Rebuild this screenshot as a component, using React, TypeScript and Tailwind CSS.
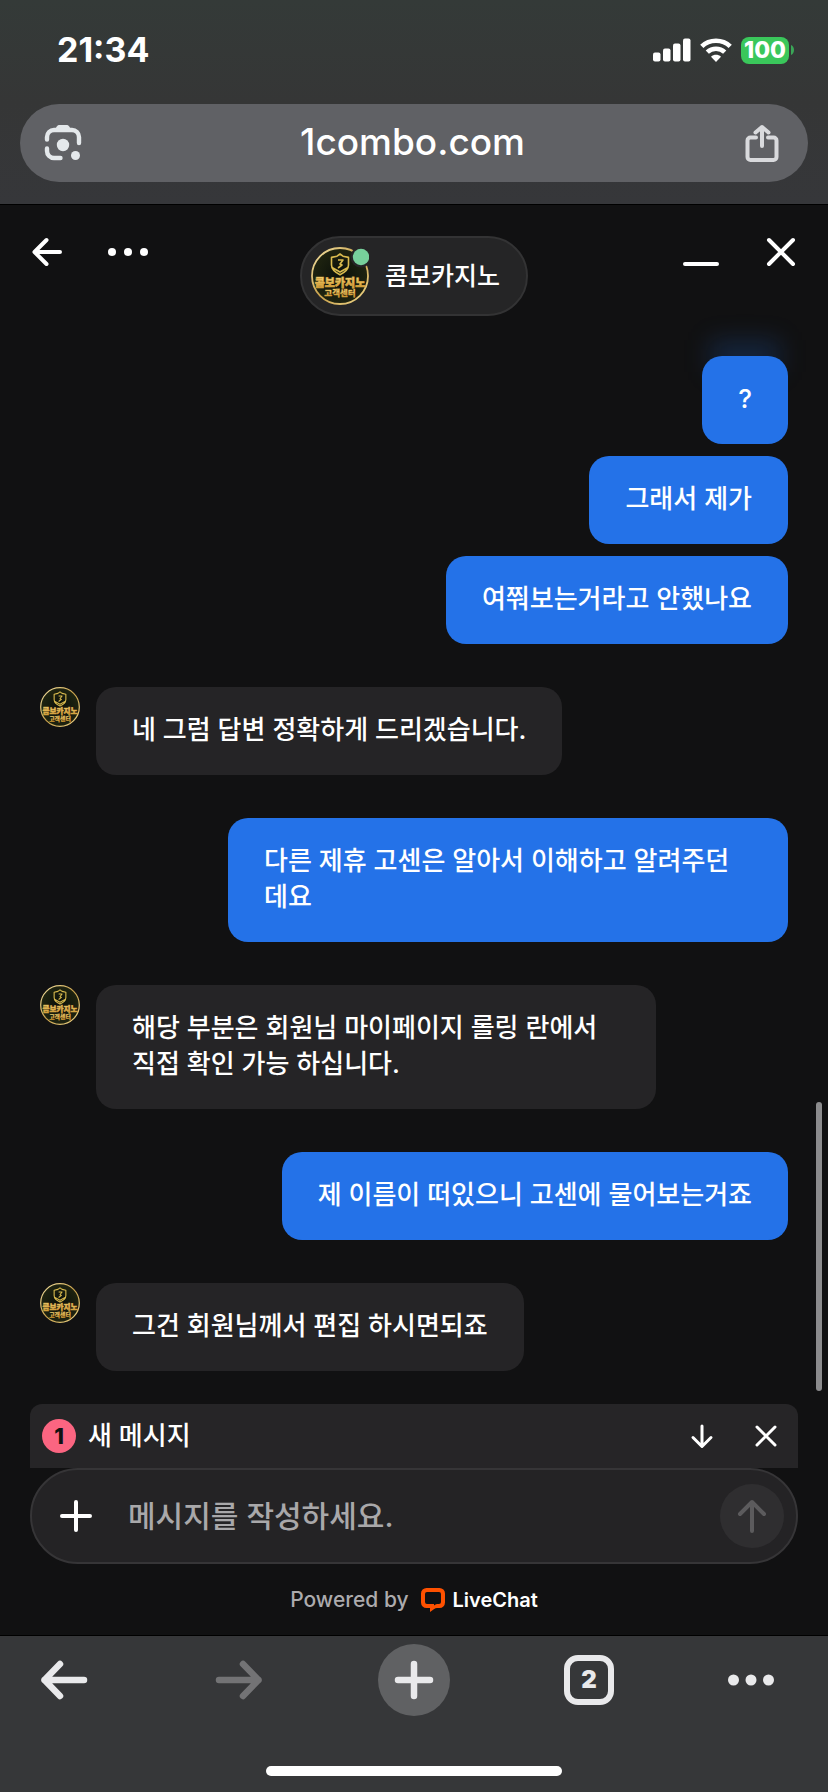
import React from "react";

type Message = { from: "agent" | "visitor"; lines: string[] };

const conversation: Message[] = [
  { from: "visitor", lines: ["?", "그래서 제가", "여쭤보는거라고 안했나요"] },
  { from: "agent", lines: ["네 그럼 답변 정확하게 드리겠습니다."] },
  { from: "visitor", lines: ["다른 제휴 고센은 알아서 이해하고 알려주던데요"] },
  { from: "agent", lines: ["해당 부분은 회원님 마이페이지 롤링 란에서 직접 확인 가능 하십니다."] },
  { from: "visitor", lines: ["제 이름이 떠있으니 고센에 물어보는거죠"] },
  { from: "agent", lines: ["그건 회원님께서 편집 하시면되죠"] },
];

function Avatar({ className, online }: { className: string; online?: boolean }) {
  return (
    <svg viewBox="0 0 58 58" className={className} role="img" aria-label="콤보카지노 고객센터">
      <defs>
        <linearGradient id="gold" x1="0" y1="0" x2="0" y2="1">
          <stop offset="0" stopColor="#ffe98a" />
          <stop offset="1" stopColor="#c98a1e" />
        </linearGradient>
        <linearGradient id="ring" x1="0" y1="0" x2="1" y2="1">
          <stop offset="0" stopColor="#f3e3a6" />
          <stop offset="0.5" stopColor="#c9a04a" />
          <stop offset="1" stopColor="#f0d98c" />
        </linearGradient>
        <radialGradient id="felt">
          <stop offset="0" stopColor="#0a0f0a" />
          <stop offset="1" stopColor="#1f2410" />
        </radialGradient>
      </defs>
      <circle cx="29" cy="29" r="28" fill="url(#felt)" stroke="url(#ring)" strokeWidth="1.8" />
      <path
        d="M29 7l3 2.200 5.500 1.200v7.600c0 4-4 7.500-8.500 9.700-4.500-2.200-8.500-5.700-8.500-9.700v-7.600l5.500-1.200zM21 20.500l8 4.500 8-4.500M27 13h5l-3 4 2 1-4 3"
        fill="none"
        stroke="#d9bb4e"
        strokeWidth="1.600"
        strokeLinejoin="round"
      />
      <text x="29" y="39.500" textAnchor="middle" fontSize="11" fontWeight="900" fill="url(#gold)" stroke="#d6a545" strokeWidth="0.700">
        콤보카지노
      </text>
      <text x="29" y="49" textAnchor="middle" fontSize="8.500" fontWeight="900" fill="url(#gold)" stroke="#c9963a" strokeWidth="0.300">
        고객센터
      </text>
      {online && <circle cx="50" cy="10" r="10.500" fill="#252526" />}
      {online && <circle cx="50" cy="10" r="8.200" fill="#77d09b" />}
    </svg>
  );
}

function Stroke({ d, w, className, box }: { d: string; w: number; className: string; box: string }) {
  return (
    <svg viewBox={box} className={className} fill="none" stroke="currentColor" strokeWidth={w} strokeLinecap="round" strokeLinejoin="round" aria-hidden="true">
      <path d={d} />
    </svg>
  );
}

function StatusBar() {
  return (
    <div className="flex h-[104px] items-start justify-between pt-[30px] pr-[34px] pl-[57px]">
      <time className="text-[34px] leading-10 font-bold">21:34</time>
      <div className="flex h-10 items-center">
        <svg viewBox="0 0 38 24" className="h-6 w-[38px]" fill="#fff" aria-hidden="true">
          <rect x="0" y="14.500" width="7.500" height="9" rx="2" />
          <rect x="10" y="10.500" width="7.500" height="13" rx="2" />
          <rect x="20" y="5.500" width="7.500" height="18" rx="2" />
          <rect x="30" y="0.500" width="7.500" height="23" rx="2" />
        </svg>
        <svg viewBox="0 0 32 24" className="ml-[9px] h-6 w-8" fill="none" stroke="#fff" strokeWidth="4.600" aria-hidden="true">
          <path d="M1.800 8.400C9.500 0.800 22.500 0.800 30.200 8.400" />
          <path d="M7.300 14.200c4.800-4.600 12.600-4.600 17.400 0" />
          <path d="M16 24l-5-5.300c2.800-2.600 7.200-2.600 10 0z" fill="#fff" stroke="none" />
        </svg>
        <div className="ml-[9px] flex h-[27px] w-12 items-center justify-center rounded-lg bg-[#3ac75b] text-[23px] leading-none font-extrabold">100</div>
        <svg viewBox="0 0 3 10" className="ml-[2px] h-[10px] w-[3px]" fill="#3aa657" aria-hidden="true">
          <path d="M0 0c4 1.500 4 8.500 0 10z" />
        </svg>
      </div>
    </div>
  );
}

function AddressBar() {
  return (
    <div className="mx-5 flex h-[78px] items-center justify-between rounded-full bg-[#606165] px-6">
      <button type="button" aria-label="렌즈" className="text-[#e4e8eb]">
        <svg viewBox="0 0 38 38" className="h-[38px] w-[38px]" aria-hidden="true">
          <path
            d="M3 15.500v-2.500a7 7 0 0 1 7-7h18a7 7 0 0 1 7 7v6M3 24.500v2.500a7 7 0 0 0 7 7h6.500"
            fill="none"
            stroke="currentColor"
            strokeWidth="4.400"
            strokeLinecap="round"
          />
          <path d="M10.500 6l2.500-3.800c.6-.8 1.200-1.200 2-1.200h8c.8 0 1.400.4 2 1.200l2.500 3.800z" fill="currentColor" />
          <circle cx="19" cy="21" r="6.200" fill="currentColor" />
          <circle cx="31.500" cy="31.500" r="4.500" fill="currentColor" />
        </svg>
      </button>
      <a href="#" className="-mt-1 text-[37px] leading-none font-medium">1combo.com</a>
      <button type="button" aria-label="공유" className="mr-[3px] text-[#d9dadd]">
        <Stroke box="0 0 38 38" className="h-[38px] w-[38px]" w={4} d="M13 13.500H7.500a3 3 0 0 0-3 3V33a3 3 0 0 0 3 3h23a3 3 0 0 0 3-3V16.500a3 3 0 0 0-3-3h-5.500M19 22V3M12.500 8.500L19 3l6.500 5.500" />
      </button>
    </div>
  );
}

function ChatHeader() {
  return (
    <header className="flex items-start justify-between px-[31px] pt-[31px]">
      <div className="flex w-[200px] items-center gap-[45px]">
        <button type="button" aria-label="뒤로">
          <Stroke box="0 0 32 32" className="h-8 w-8" w={4} d="M15.500 4L3.500 16l12 12M3.500 16H29" />
        </button>
        <button type="button" aria-label="메뉴">
          <svg viewBox="0 0 40 8" className="h-2 w-10" fill="#fff" aria-hidden="true">
            <circle cx="4" cy="4" r="4" />
            <circle cx="20" cy="4" r="4" />
            <circle cx="36" cy="4" r="4" />
          </svg>
        </button>
      </div>
      <div className="flex h-20 items-center rounded-full border-2 border-[#333334] bg-[#252526] pr-[26px] pl-[9px]">
        <Avatar className="h-[58px] w-[58px]" online />
        <h1 className="ml-4 text-[25px] font-medium">콤보카지노</h1>
      </div>
      <div className="flex w-[200px] items-center justify-end gap-[46px]">
        <button type="button" aria-label="최소화">
          <Stroke box="0 0 36 32" className="h-8 w-9" w={4} d="M2 28H34" />
        </button>
        <button type="button" aria-label="닫기">
          <Stroke box="0 0 32 32" className="h-8 w-8" w={4} d="M4 4l24 24M28 4L4 28" />
        </button>
      </div>
    </header>
  );
}

function Conversation() {
  return (
    <main className="relative flex flex-col gap-[43px] px-10 pt-10 pb-[33px]">
      <div className="absolute top-6 right-12 h-8 w-[70px] bg-[#2472e8]/20 blur-md" />
      {conversation.map((m, i) =>
        m.from === "visitor" ? (
          <section key={i} className="relative flex flex-col items-end gap-3">
            {m.lines.map((t) => (
              <p key={t} className="max-w-[560px] rounded-[20px] bg-[#2472e8] px-9 pt-[25px] pb-[27px]">{t}</p>
            ))}
          </section>
        ) : (
          <section key={i} className="flex items-start gap-4">
            <Avatar className="h-10 w-10 shrink-0" />
            {m.lines.map((t) => (
              <p key={t} className="max-w-[560px] rounded-[20px] bg-[#252426] px-9 pt-[25px] pb-[27px]">{t}</p>
            ))}
          </section>
        )
      )}
      <div className="absolute right-[6px] bottom-[13px] h-[289px] w-[6px] rounded-full bg-[#8b8b8d]" />
    </main>
  );
}

function Composer() {
  return (
    <footer className="px-[30px]">
      <div className="flex h-16 items-center rounded-t-xl bg-[#262527] pr-[19px] pl-3">
        <span className="flex h-[34px] w-[34px] items-center justify-center rounded-full bg-[#fb6581] text-[22px] leading-none font-extrabold text-[#111]">1</span>
        <span className="ml-3">새 메시지</span>
        <button type="button" aria-label="아래로" className="ml-auto">
          <Stroke box="0 0 26 26" className="h-[26px] w-[26px]" w={3} d="M13 3v20M4 14.500l9 9 9-9" />
        </button>
        <button type="button" aria-label="알림 닫기" className="ml-[38px]">
          <Stroke box="0 0 26 26" className="h-[26px] w-[26px]" w={3} d="M4 4l18 18M22 4L4 22" />
        </button>
      </div>
      <form className="flex h-24 items-center rounded-full border-2 border-[#363537] bg-[#242325] pr-3 pl-7" onSubmit={(e) => e.preventDefault()}>
        <button type="button" aria-label="첨부">
          <Stroke box="0 0 32 32" className="h-8 w-8" w={4} d="M16 2v28M2 16h28" />
        </button>
        <input
          type="text"
          aria-label="메시지"
          placeholder="메시지를 작성하세요."
          className="ml-9 min-w-0 flex-1 bg-transparent text-[30px] leading-10 outline-none placeholder:text-[#a9a8aa]"
        />
        <button type="submit" aria-label="보내기" className="flex h-16 w-16 items-center justify-center rounded-full bg-[#2f2e30] text-[#5c5b5d]">
          <Stroke box="0 0 32 36" className="h-9 w-8" w={4} d="M16 33V4M4 16L16 4l12 12" />
        </button>
      </form>
      <div className="flex h-[71px] items-center justify-center">
        <span className="text-[21px] leading-7 text-[#acabad]">Powered by</span>
        <a href="#" className="ml-3 flex items-center gap-2">
          <svg viewBox="0 0 24 24" className="h-6 w-6" aria-hidden="true">
            <path
              fillRule="evenodd"
              fill="#ff5100"
              d="M5.500 0h13A5.500 5.500 0 0 1 24 5.500v9a5.500 5.500 0 0 1-5.500 5.500H16c-2 0-4 2-7 4v-4H5.500A5.500 5.500 0 0 1 0 14.500v-9A5.500 5.500 0 0 1 5.500 0zM6 4a2 2 0 0 0-2 2v8a2 2 0 0 0 2 2h7v1.500c1-1 2-1.500 3-1.500h2a2 2 0 0 0 2-2V6a2 2 0 0 0-2-2z"
            />
          </svg>
          <span className="text-xl leading-7 font-semibold">LiveChat</span>
        </a>
      </div>
    </footer>
  );
}

function BrowserToolbar() {
  return (
    <nav className="border-t border-black bg-[#363739] text-[#e9e9eb]">
      <div className="flex h-[88px] items-center justify-between px-7">
        <button type="button" aria-label="이전 페이지" className="flex w-[72px] justify-center">
          <Stroke box="0 0 52 44" className="h-11 w-[52px]" w={6.5} d="M22 6L6.500 22 22 38M6.500 22H46" />
        </button>
        <button type="button" aria-label="다음 페이지" className="flex w-[72px] justify-center text-[#737375]">
          <Stroke box="0 0 52 44" className="h-11 w-[52px]" w={6.5} d="M30 6l15.500 16L30 38M45.500 22H6" />
        </button>
        <button type="button" aria-label="새 탭" className="flex h-[72px] w-[72px] items-center justify-center rounded-full bg-[#606163]">
          <Stroke box="0 0 44 44" className="h-11 w-11" w={6.5} d="M22 6v32M6 22h32" />
        </button>
        <button type="button" aria-label="탭 2개" className="flex w-[72px] justify-center">
          <span className="flex h-[50px] w-[50px] items-center justify-center rounded-[14px] border-[6px] border-[#e9e9eb] text-2xl leading-none font-black">2</span>
        </button>
        <button type="button" aria-label="더보기" className="flex w-[72px]">
          <svg viewBox="0 0 48 12" className="h-3 w-12" fill="currentColor" aria-hidden="true">
            <circle cx="5.500" cy="6" r="5.500" />
            <circle cx="23" cy="6" r="5.500" />
            <circle cx="40.500" cy="6" r="5.500" />
          </svg>
        </button>
      </div>
      <div className="flex justify-center pt-[42px] pb-4">
        <div className="h-[10px] w-[296px] rounded-full bg-white" />
      </div>
    </nav>
  );
}

export default function App() {
  return (
    <div className="flex min-h-screen flex-col bg-[#111112] font-['Inter','Noto_Sans_CJK_KR',sans-serif] text-[26px] leading-9 font-medium text-white">
      <div className="border-b border-black bg-linear-to-b from-[#343a38] via-[#353636] to-[#36373a] pb-[22px]">
        <StatusBar />
        <AddressBar />
      </div>
      <ChatHeader />
      <Conversation />
      <Composer />
      <BrowserToolbar />
    </div>
  );
}
